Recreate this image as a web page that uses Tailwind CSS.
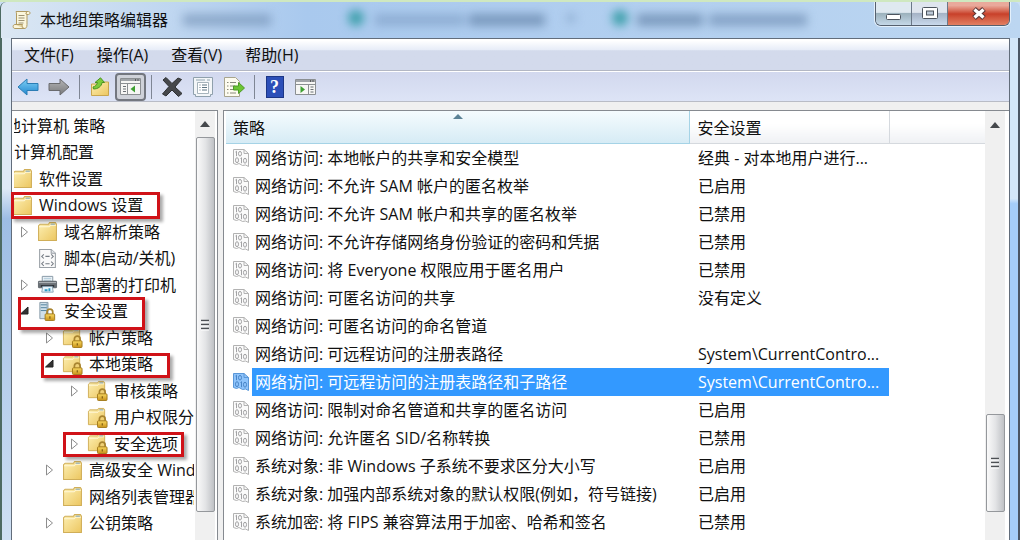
<!DOCTYPE html>
<html lang="zh-CN">
  <head>
    <meta charset="UTF-8" />
    <meta name="viewport" content="width=device-width, initial-scale=1.0" />
    <title>本地组策略编辑器</title>
    <script src="https://cdn.jsdelivr.net/npm/@tailwindcss/browser@4"></script>
  </head>
  <body
    class="h-screen overflow-hidden flex flex-col bg-[#cbdff5] border-t-2 border-[#cfe8c0] font-['Open_Sans','Noto_Sans_CJK_SC',sans-serif] text-base leading-6 text-[#111]"
  >
    <!-- icon sprite -->
    <svg class="absolute w-0 h-0" aria-hidden="true">
      <defs>
        <linearGradient id="gFolder" x1="0" y1="0" x2="1" y2="1">
          <stop offset="0" stop-color="#fdf0b4" />
          <stop offset="1" stop-color="#ecc660" />
        </linearGradient>
        <linearGradient id="gBlue" x1="0" y1="0" x2="0" y2="1">
          <stop offset="0" stop-color="#7fd0f5" />
          <stop offset="1" stop-color="#2187cf" />
        </linearGradient>
        <linearGradient id="gGray" x1="0" y1="0" x2="0" y2="1">
          <stop offset="0" stop-color="#b4b4b6" />
          <stop offset="1" stop-color="#77787a" />
        </linearGradient>
        <linearGradient id="gLock" x1="0" y1="0" x2="0" y2="1">
          <stop offset="0" stop-color="#f8d860" />
          <stop offset="1" stop-color="#c8921a" />
        </linearGradient>
      </defs>
      <symbol id="folder" viewBox="0 0 20 20">
        <path d="M1.500 18.500V4.500L3 3h8l1-1.500h5.500l1 1.500v15.500z" fill="url(#gFolder)" stroke="#d0ae58" />
        <path d="M2 5.500h9.500l1.500-1.500h5" fill="none" stroke="#fff8d8" />
        <path d="M13 3h4" stroke="#7fa6c4" />
      </symbol>
      <symbol id="lock" viewBox="0 0 12 14">
        <path d="M3 7V4.500a3 3 0 0 1 6 0V7" fill="none" stroke="#a88430" stroke-width="1.800" />
        <rect x="1" y="6.500" width="10" height="7" rx="1" fill="url(#gLock)" stroke="#a27a1c" />
        <path d="M6 9v2.500" stroke="#7a5a10" stroke-width="1.200" />
      </symbol>
      <symbol id="folderLock" viewBox="0 0 22 22">
        <use href="#folder" width="20" height="20" />
        <use href="#lock" x="10" y="8" width="12" height="14" />
      </symbol>
      <symbol id="server" viewBox="0 0 22 22">
        <path d="M3 1.500h8.500v17H3z" fill="#cfe0ea" stroke="#8397a6" />
        <path d="M4 4h6.500M4 7h6.500M4 10h6.500" stroke="#4f7f9c" />
        <path d="M10.500 2v16" stroke="#8fa9ba" />
        <use href="#lock" x="7" y="7" width="13" height="14" />
      </symbol>
      <symbol id="script" viewBox="0 0 20 20">
        <path d="M2.500 1.500h11l4 3.500v13.500h-15z" fill="#fafafa" stroke="#9aa0a6" />
        <path d="M13.500 1.500V5h4" fill="#e2e6ea" stroke="#9aa0a6" />
        <path d="M6.500 6L4.500 8l2 2M13.500 6l2 2-2 2M8 8h4M6.500 13l-2 2 2 2M13.500 13l2 2-2 2M8 15h4" fill="none" stroke="#767c84" />
      </symbol>
      <symbol id="printer" viewBox="0 0 22 20">
        <path d="M5.500 1.500h11v6h-11z" fill="#f4f8fb" stroke="#8496a4" />
        <path d="M7 3.500h8M7 5.500h8" stroke="#a7c3d4" />
        <rect x="1" y="6" width="20" height="8" rx="1.500" fill="#6a7076" />
        <path d="M2 8h18" stroke="#b4babf" />
        <path d="M4 11.500h14" stroke="#2e3338" stroke-width="2" />
        <path d="M6 12h10l1 6H5z" fill="#e6f3fa" stroke="#8aa4b4" />
        <path d="M8 15h3v2H8zM12 14h2v3h-2z" fill="#2d9bc4" />
      </symbol>
      <symbol id="binary" viewBox="0 0 18 20">
        <path d="M1.500 1.500h10.500l4.500 4v13l-3-1.500-3 .500-3.500-2-2.500 1-3-1z" fill="#fbfbfb" stroke="#b2b2b2" />
        <path d="M12 1.500v4h4.500" fill="none" stroke="#b2b2b2" />
        <g fill="none" stroke="#a2a2a4">
          <path d="M3.500 4l1-.800v5M8.500 10.500l1-.800v5.500" />
          <ellipse cx="8" cy="5.700" rx="1.500" ry="2.300" />
          <ellipse cx="5" cy="12.200" rx="1.500" ry="2.500" />
          <ellipse cx="13" cy="12.700" rx="1.500" ry="2.500" />
        </g>
      </symbol>
      <symbol id="binarySel" viewBox="0 0 18 20">
        <path d="M1.500 1.500h10.500l4.500 4v13l-3-1.500-3 .500-3.500-2-2.500 1-3-1z" fill="#8fc4fb" stroke="#5a97d8" />
        <path d="M12 1.500v4h4.500" fill="none" stroke="#5a97d8" />
        <g fill="none" stroke="#4a86c8">
          <path d="M3.500 4l1-.800v5M8.500 10.500l1-.800v5.500" />
          <ellipse cx="8" cy="5.700" rx="1.500" ry="2.300" />
          <ellipse cx="5" cy="12.200" rx="1.500" ry="2.500" />
          <ellipse cx="13" cy="12.700" rx="1.500" ry="2.500" />
        </g>
      </symbol>
      <symbol id="grip" viewBox="0 0 10 12">
        <path d="M1 1.500h8M1 5.500h8M1 9.500h8" stroke="#4d5054" stroke-width="1.500" />
        <path d="M1 3h8M1 7h8M1 11h8" stroke="#fff" />
      </symbol>
      <symbol id="scrollUp" viewBox="0 0 10 6">
        <path d="M0 6L5 0l5 6z" fill="#45484c" />
      </symbol>
    </svg>

    <!-- title bar -->
    <header
      class="relative h-9 shrink-0 flex items-start justify-between overflow-hidden rounded-t-md border-l border-[#4d6a62] bg-linear-to-r from-[#dbe7f3] via-[#a9c9ee] via-30% to-[#bcd6f1]"
    >
      <!-- tabs of the window behind, seen through the glass -->
      <div class="absolute inset-0 blur-[5px]" aria-hidden="true">
        <span class="absolute left-[182px] top-3 w-[88px] h-3 bg-[#6f8eb2]/60"></span>
        <span class="absolute left-[347px] top-2 w-4 h-4 rounded-full bg-[#3fa0ac]"></span>
        <span class="absolute left-[374px] top-3 w-[90px] h-3 bg-[#7393bb]/50"></span>
        <span class="absolute left-[468px] top-3 w-[76px] h-3 bg-[#58789f]/60"></span>
        <span class="absolute left-[566px] top-3 w-2 h-2 bg-[#6d8db5]/50"></span>
        <span class="absolute left-[611px] top-2 w-4 h-4 rounded-full bg-[#3fa0ac]"></span>
        <span class="absolute left-[636px] top-3 w-[66px] h-3 bg-[#58789f]/60"></span>
        <span class="absolute left-[708px] top-3 w-[98px] h-3 bg-[#58789f]/50"></span>
      </div>
      <div class="relative flex items-center gap-2 pl-[11px] pt-1">
        <svg class="w-5 h-5" viewBox="0 0 20 20" aria-hidden="true">
          <path d="M4 1.500h12.500c2 0 2 3 0 3H15v10c0 3-1 4-3 4H3c-2.500 0-2.500-4 0-4h1.500V4C4.500 2.500 4 2 4 1.500z" fill="#fbf6dc" stroke="#b09a62" />
          <path d="M15 4.500c-1.500 0-1.500-2 0-2.500M3 14.500h7.500c-1 1.500 0 3.500 1.500 4" fill="#e6d7a4" stroke="#b09a62" />
          <path d="M6.500 5.500h6M6.500 8h6M6.500 10.500h6M6.500 13h5" stroke="#9c9274" />
        </svg>
        <h1 class="leading-7">本地组策略编辑器</h1>
      </div>
      <div
        class="relative mr-2.5 flex h-6 rounded-b-md border border-t-0 border-[#56606e] overflow-hidden shadow-[0_0_0_1px_#e4f0fb]"
      >
        <button aria-label="最小化" class="w-9 grid place-items-center border-r border-[#6b7888] bg-linear-to-b from-[#dfe9f0] from-45% via-[#9cb2bd] via-50% to-[#c5d8e8]">
          <svg class="w-4 h-6" viewBox="0 0 16 24"><rect x=".5" y="12.500" width="14" height="5" rx="1" fill="#fff" stroke="#4d545e" /></svg>
        </button>
        <button aria-label="最大化" class="w-9 grid place-items-center border-r border-[#6b7888] bg-linear-to-b from-[#dfe5ee] from-45% via-[#a5b3c6] via-50% to-[#c9d9ec]">
          <svg class="w-4 h-6" viewBox="0 0 16 24">
            <rect x=".5" y="5.500" width="15" height="11" rx="1" fill="#fff" stroke="#4d545e" />
            <rect x="4.500" y="9" width="7" height="4" fill="#bcc8d6" stroke="#4d545e" />
          </svg>
        </button>
        <button aria-label="关闭" class="w-[61px] grid place-items-center bg-linear-to-b from-[#e9a99b] from-15% via-[#c8402a] via-52% to-[#e27f62]">
          <svg class="w-4 h-6" viewBox="0 0 16 24">
            <path d="M3 7l10 9M13 7L3 16" stroke="#5a3636" stroke-width="5.500" />
            <path d="M3.500 7.500l9 8M12.500 7.500l-9 8" stroke="#fff" stroke-width="3.300" />
          </svg>
        </button>
      </div>
    </header>

    <div class="flex-1 min-h-0 flex">
      <div class="w-[11px] shrink-0 border-l-2 border-[#4d6a62] bg-linear-to-b from-[#dfeaf6] from-30% via-[#9dbde4] via-36% to-[#cfe0f3]"></div>

      <main class="flex-1 min-w-0 flex flex-col border border-b-0 border-[#626d7b] bg-[#f0f0f0]">
        <!-- menu -->
        <nav class="h-8 shrink-0 flex items-center gap-[23px] pl-3 border-b border-[#b3b7c4] bg-linear-to-b from-white from-5% via-[#e8edf8] via-34% to-[#d3daec] to-38%">
          <button>文件(F)</button>
          <button>操作(A)</button>
          <button>查看(V)</button>
          <button>帮助(H)</button>
        </nav>

        <!-- toolbar -->
        <div
          role="toolbar"
          class="h-[31px] shrink-0 flex items-center border-t border-t-white border-b border-b-[#b9bcc6] bg-linear-to-b from-[#d2d8ee] to-[#dde4f6]"
        >
          <button aria-label="后退" class="w-[31px] h-7 grid place-items-center">
            <svg class="w-[22px] h-5" viewBox="0 0 22 20"><path d="M1 10l9-8v4.500h11v7H10V18z" fill="url(#gBlue)" stroke="#2b7db5" /></svg>
          </button>
          <button aria-label="前进" class="w-[31px] h-7 grid place-items-center">
            <svg class="w-[22px] h-5" viewBox="0 0 22 20"><path d="M21 10l-9-8v4.500H1v7h11V18z" fill="url(#gGray)" stroke="#6a6b6e" /></svg>
          </button>
          <span class="w-[10px] flex justify-center"><i class="w-px h-6 bg-[#7f8694]"></i></span>
          <button aria-label="上移一级" class="w-[31px] h-7 grid place-items-center">
            <svg class="w-5 h-5" viewBox="0 0 20 20">
              <path d="M1.500 18.500V7h8l2-2h7v13.500z" fill="url(#gFolder)" stroke="#c9a64e" />
              <path d="M3 10c2-.500 4-2 4.500-4.500L5 5.500 10.500.800l4 4.700H12c-.500 4-4 6.500-8.500 6.500z" fill="#7ccb3c" stroke="#4b9322" />
            </svg>
          </button>
          <button aria-label="显示/隐藏控制台树" aria-pressed="true" class="w-[31px] h-7 grid place-items-center rounded-sm border-2 border-[#73777f] bg-[#cfd2d9]">
            <svg class="w-[22px] h-5" viewBox="0 0 22 20">
              <path d="M.5 1.500h20v16H.5z" fill="#f6f6f4" stroke="#8b8f92" />
              <path d="M1 3h19" stroke="#a0a4a8" stroke-width="2" />
              <path d="M15 3h1M17.500 3h1" stroke="#444" stroke-width="1.500" />
              <path d="M1 6.500h20M7.500 7v10" stroke="#8b8f92" />
              <path d="M3 9.500h3M3 12h3M3 14.500h3" stroke="#6b7075" />
              <path d="M15 8.500v7L10.500 12z" fill="#3fa032" />
            </svg>
          </button>
          <span class="w-[10px] flex justify-center"><i class="w-px h-6 bg-[#7f8694]"></i></span>
          <button aria-label="删除" class="w-[31px] h-7 grid place-items-center">
            <svg class="w-[22px] h-5" viewBox="0 0 22 20">
              <path d="M2 3l3-2.500 6 6 6-5.500 3.500 1.500L14 10l7 6.500-3.500 3L11 13l-6 6-3.500-2L8 9.500z" fill="#46484b" stroke="#2f3133" />
            </svg>
          </button>
          <button aria-label="属性" class="w-[31px] h-7 grid place-items-center">
            <svg class="w-5 h-5" viewBox="0 0 20 20">
              <path d="M.5.500h19v17h-2v2h-15v-2h-2z" fill="#f3f6f8" stroke="#8fa0ac" />
              <path d="M3 3h9M14 3h3" stroke="#90a4b0" />
              <path d="M4.500 5.500h11v11h-11z" fill="#fff" stroke="#a7b4bc" />
              <path d="M6.500 8h1M9 8h5M6.500 10.500h1M9 10.500h5M6.500 13h1M9 13h5" stroke="#5d7482" />
            </svg>
          </button>
          <button aria-label="导出列表" class="w-[31px] h-7 grid place-items-center">
            <svg class="w-[22px] h-5" viewBox="0 0 22 20">
              <path d="M1.500.500h11l4 4v15h-15z" fill="#fdfbef" stroke="#a8a58e" />
              <path d="M4 5.500h1.500M7 5.500h6M4 9h1.500M7 9h5M4 12.500h1.500M7 12.500h3M4 16h1.500M7 16h6" stroke="#8a8a7c" />
              <path d="M10.500 9h5V5.500L21.500 11l-6 5.500V13h-5z" fill="#6cc534" stroke="#4d9a24" />
            </svg>
          </button>
          <span class="w-[10px] flex justify-center"><i class="w-px h-6 bg-[#7f8694]"></i></span>
          <button aria-label="帮助" class="w-[31px] h-7 grid place-items-center">
            <span class="w-[18px] h-[22px] bg-[#2c4fb8] border border-[#1c3686] text-white font-['Liberation_Serif',serif] font-bold text-lg leading-5">?</span>
          </button>
          <button aria-label="显示/隐藏操作窗格" class="w-[31px] h-7 grid place-items-center">
            <svg class="w-[22px] h-5" viewBox="0 0 22 20">
              <path d="M.5 2.500h20v15H.5z" fill="#f6f6f4" stroke="#8b8f92" />
              <path d="M1 4h19" stroke="#a0a4a8" stroke-width="2" />
              <path d="M15 4h1M17.500 4h1" stroke="#444" stroke-width="1.500" />
              <path d="M1 7.500h20M13.500 8v10" stroke="#8b8f92" />
              <path d="M15.500 10h3M15.500 12.500h3M15.500 15h3" stroke="#6b7075" />
              <path d="M5.500 9v7l4.500-3.500z" fill="#3fa032" />
            </svg>
          </button>
        </div>

        <div class="flex-1 min-h-0 flex gap-[5px] pt-2">
          <!-- console tree -->
          <section class="relative w-[206px] shrink-0 flex border-t border-r border-[#868a90] bg-white pr-0.5">
            <ul id="arbol" class="flex-1 min-w-0 overflow-hidden ml-0.5 mr-px"></ul>
            <div class="w-5 flex flex-col items-center bg-[#f0f0f0]" aria-hidden="true">
              <div class="h-[26px] grid place-items-center"><svg class="w-2.5 h-1.5"><use href="#scrollUp" /></svg></div>
              <div class="w-[19px] h-[375px] grid place-items-center rounded-xs border border-[#95989c] bg-linear-to-r from-[#fafafa] via-[#e3e4e6] to-[#bfc1c5]">
                <svg class="w-2.5 h-3"><use href="#grip" /></svg>
              </div>
            </div>
            <!-- highlight frames -->
            <span class="absolute -left-px top-[81px] w-[149px] h-[27px] border-3 border-[#d01218] shadow-[3px_3px_3px_#0005]"></span>
            <span class="absolute left-1.5 top-[186px] w-[127px] h-[33px] border-3 border-[#d01218] shadow-[3px_3px_3px_#0005]"></span>
            <span class="absolute left-[29px] top-[242px] w-[129px] h-[25px] border-3 border-[#d01218] shadow-[3px_3px_3px_#0005]"></span>
            <span class="absolute left-[51px] top-[321px] w-[121px] h-[25px] border-3 border-[#d01218] shadow-[3px_3px_3px_#0005]"></span>
          </section>

          <!-- policy list -->
          <section class="flex-1 min-w-0 flex border-t border-l border-[#868a90] bg-white pl-0.5 pr-1">
            <div class="flex-1 min-w-0 overflow-hidden">
              <table class="w-full table-fixed border-collapse text-left">
                <colgroup>
                  <col />
                  <col class="w-[200px]" />
                  <col class="w-[96px]" />
                </colgroup>
                <thead>
                  <tr class="h-8">
                    <th class="relative p-0 pl-[7px] pt-0.5 font-normal border-b border-r border-[#a5d3e6] bg-linear-to-b from-[#f5fbfe] to-[#d6ebf5]">
                      策略
                      <svg class="absolute top-0.5 left-1/2 -ml-1 w-2.5 h-1.5" viewBox="0 0 10 6" aria-hidden="true"><path d="M0 6l5-5 5 5z" fill="#5b8296" /></svg>
                    </th>
                    <th class="p-0 pl-2 pt-0.5 font-normal border-b border-r border-[#d5d9de] bg-linear-to-b from-white from-40% to-[#eff1f4]">安全设置</th>
                    <td class="p-0 border-b border-[#d5d9de] bg-linear-to-b from-white from-40% to-[#eff1f4]"></td>
                  </tr>
                </thead>
                <tbody id="directivas"></tbody>
              </table>
            </div>
            <div class="w-5 flex flex-col items-center bg-[#f0f0f0]" aria-hidden="true">
              <div class="h-7 grid place-items-center"><svg class="w-2.5 h-1.5"><use href="#scrollUp" /></svg></div>
              <div class="mt-[275px] w-[19px] h-[98px] grid place-items-center rounded-xs border border-[#95989c] bg-linear-to-r from-[#fafafa] via-[#e3e4e6] to-[#bfc1c5]">
                <svg class="w-2.5 h-3"><use href="#grip" /></svg>
              </div>
            </div>
          </section>
        </div>
      </main>

      <div class="w-[10px] shrink-0 border-r-2 border-[#4a5563] bg-linear-to-b from-[#d3e6f8] from-32% to-[#a5cdf8] to-33%"></div>
    </div>

    <script>
      const sangria = {
        raiz: "-ml-[9px]",
        0: "ml-0",
        1: "-ml-[19px]",
        2: "ml-1.5",
        3: "ml-[31px]",
        4: "ml-[56px]",
      };

      // nivel, flecha, icono, texto
      const nodos = [
        ["raiz", "", "", "地计算机 策略"],
        [0, "", "", "计算机配置"],
        [1, "", "folder", "软件设置"],
        [1, "", "folder", "Windows 设置"],
        [2, "cerrado", "folder", "域名解析策略"],
        [2, "", "script", "脚本(启动/关机)"],
        [2, "cerrado", "printer", "已部署的打印机"],
        [2, "abierto", "server", "安全设置"],
        [3, "cerrado", "folderLock", "帐户策略"],
        [3, "abierto", "folderLock", "本地策略"],
        [4, "cerrado", "folderLock", "审核策略"],
        [4, "", "folderLock", "用户权限分配"],
        [4, "cerrado", "folderLock", "安全选项"],
        [3, "cerrado", "folder", "高级安全 Windows"],
        [3, "", "folder", "网络列表管理器"],
        [3, "cerrado", "folder", "公钥策略"],
      ];

      const flechas = {
        "": "",
        cerrado: '<path d="M1.500 1v10L7.500 6z" fill="#fff" stroke="#8d8d8d"/>',
        abierto: '<path d="M8 2v7H.5z" fill="#333" stroke="#222"/>',
      };

      document.getElementById("arbol").innerHTML = nodos
        .map(([nivel, flecha, icono, texto]) => {
          const dibujo = icono
            ? `<svg class="w-[17px] h-3 shrink-0" viewBox="0 0 17 12">${flechas[flecha]}</svg>
               <svg class="w-[21px] h-[21px] shrink-0 mr-1.5"><use href="#${icono}"/></svg>`
            : "";
          return `<li class="odd:h-[27px] even:h-[26px] first:mt-px flex items-center whitespace-nowrap ${sangria[nivel]}">${dibujo}<span>${texto}</span></li>`;
        })
        .join("");

      const politicas = [
        ["网络访问: 本地帐户的共享和安全模型", "经典 - 对本地用户进行..."],
        ["网络访问: 不允许 SAM 帐户的匿名枚举", "已启用"],
        ["网络访问: 不允许 SAM 帐户和共享的匿名枚举", "已禁用"],
        ["网络访问: 不允许存储网络身份验证的密码和凭据", "已禁用"],
        ["网络访问: 将 Everyone 权限应用于匿名用户", "已禁用"],
        ["网络访问: 可匿名访问的共享", "没有定义"],
        ["网络访问: 可匿名访问的命名管道", ""],
        ["网络访问: 可远程访问的注册表路径", "System\\CurrentContro..."],
        ["网络访问: 可远程访问的注册表路径和子路径", "System\\CurrentContro..."],
        ["网络访问: 限制对命名管道和共享的匿名访问", "已启用"],
        ["网络访问: 允许匿名 SID/名称转换", "已禁用"],
        ["系统对象: 非 Windows 子系统不要求区分大小写", "已启用"],
        ["系统对象: 加强内部系统对象的默认权限(例如，符号链接)", "已启用"],
        ["系统加密: 将 FIPS 兼容算法用于加密、哈希和签名", "已禁用"],
      ];
      const seleccionada = 8;

      document.getElementById("directivas").innerHTML = politicas
        .map(([nombre, valor], i) => {
          const sel = i === seleccionada;
          const celda = sel ? "bg-[#3399ff] text-white" : "";
          const icono = sel ? "binarySel" : "binary";
          return `<tr class="h-7 whitespace-nowrap">
            <td class="p-0"><div class="flex items-center pl-1.5">
              <svg class="w-[18px] h-5 shrink-0 mr-0.5"><use href="#${icono}"/></svg>
              <span class="flex-1 h-7 leading-7 pl-[3px] ${celda}">${nombre}</span>
            </div></td>
            <td class="p-0 pl-[9px] ${celda}">${valor}</td>
            <td class="p-0"></td>
          </tr>`;
        })
        .join("");
    </script>
  </body>
</html>
